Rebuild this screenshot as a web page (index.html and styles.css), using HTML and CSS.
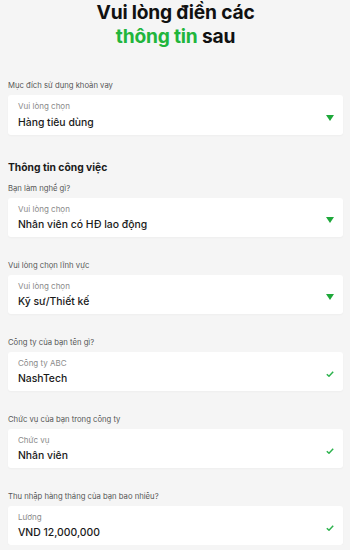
FILE: index.html
```html
<!DOCTYPE html>
<html lang="vi">
<head>
<meta charset="utf-8">
<link rel="stylesheet" href="styles.css">
</head>
<body>
<main class="page">
  <h1 class="title">Vui lòng điền các<br><span class="accent">thông tin</span> sau</h1>

  <div class="field first">
    <div class="label">Mục đích sử dụng khoản vay</div>
    <div class="card">
      <div class="text">
        <div class="hint">Vui lòng chọn</div>
        <div class="value">Hàng tiêu dùng</div>
      </div>
      <svg class="arrow" viewBox="0 0 8 6" width="8" height="6"><path d="M0 0H8L4 6Z" fill="#1ea83a"/></svg>
    </div>
  </div>

  <h2 class="section">Thông tin công việc</h2>

  <div class="field after-section">
    <div class="label">Bạn làm nghề gì?</div>
    <div class="card">
      <div class="text">
        <div class="hint">Vui lòng chọn</div>
        <div class="value">Nhân viên có HĐ lao động</div>
      </div>
      <svg class="arrow" viewBox="0 0 8 6" width="8" height="6"><path d="M0 0H8L4 6Z" fill="#1ea83a"/></svg>
    </div>
  </div>

  <div class="field">
    <div class="label">Vui lòng chọn lĩnh vực</div>
    <div class="card">
      <div class="text">
        <div class="hint">Vui lòng chọn</div>
        <div class="value">Kỹ sư/Thiết kế</div>
      </div>
      <svg class="arrow" viewBox="0 0 8 6" width="8" height="6"><path d="M0 0H8L4 6Z" fill="#1ea83a"/></svg>
    </div>
  </div>

  <div class="field">
    <div class="label">Công ty của bạn tên gì?</div>
    <div class="card">
      <div class="text">
        <div class="hint">Công ty ABC</div>
        <div class="value">NashTech</div>
      </div>
      <svg class="check" viewBox="0 0 8 6" width="8" height="6"><path d="M0.8 3.2L3 5.2L7.2 0.8" fill="none" stroke="#2bb24c" stroke-width="1.5"/></svg>
    </div>
  </div>

  <div class="field">
    <div class="label">Chức vụ của bạn trong công ty</div>
    <div class="card">
      <div class="text">
        <div class="hint">Chức vụ</div>
        <div class="value">Nhân viên</div>
      </div>
      <svg class="check" viewBox="0 0 8 6" width="8" height="6"><path d="M0.8 3.2L3 5.2L7.2 0.8" fill="none" stroke="#2bb24c" stroke-width="1.5"/></svg>
    </div>
  </div>

  <div class="field">
    <div class="label">Thu nhập hàng tháng của bạn bao nhiêu?</div>
    <div class="card">
      <div class="text">
        <div class="hint">Lương</div>
        <div class="value">VND 12,000,000</div>
      </div>
      <svg class="check" viewBox="0 0 8 6" width="8" height="6"><path d="M0.8 3.2L3 5.2L7.2 0.8" fill="none" stroke="#2bb24c" stroke-width="1.5"/></svg>
    </div>
  </div>
</main>
</body>
</html>
```

FILE: styles.css
```css
* { box-sizing: border-box; }
html, body {
  margin: 0;
  background: #f5f5f5;
}
body {
  font-family: "Inter", "Open Sans", sans-serif;
  color: #1a1a1a;
}
.page {
  padding: 0 7px 0 8px;
  display: flex;
  flex-direction: column;
}
.title {
  margin: 0;
  text-align: center;
  font-size: 19.2px;
  line-height: 24px;
  font-weight: 700;
  color: #111;
  letter-spacing: -0.2px;
}
.accent { color: #21b53c; }
.field {
  display: flex;
  flex-direction: column;
  margin-top: 22.5px;
}
.field.first { margin-top: 32px; }
.field.after-section { margin-top: 8px; }
.label {
  font-size: 7.7px;
  line-height: 12px;
  color: #555;
  margin-bottom: 3px;
}
.section {
  margin: 24px 0 0;
  font-size: 10.3px;
  line-height: 16px;
  font-weight: 700;
  color: #1a1a1a;
}
.card {
  background: #fff;
  border-radius: 3px;
  height: 39.5px;
  padding: 6px 9px 0 10px;
  display: flex;
  align-items: center;
  justify-content: space-between;
  box-shadow: 0 1px 2px rgba(0,0,0,0.03);
}
.text {
  display: flex;
  flex-direction: column;
  align-self: flex-start;
}
.hint {
  font-size: 8px;
  line-height: 10px;
  color: #8a8a8a;
}
.value {
  margin-top: 3.5px;
  font-size: 10.4px;
  line-height: 16px;
  font-weight: 500;
  color: #1a1a1a;
}
.arrow, .check { flex: none; }
```
